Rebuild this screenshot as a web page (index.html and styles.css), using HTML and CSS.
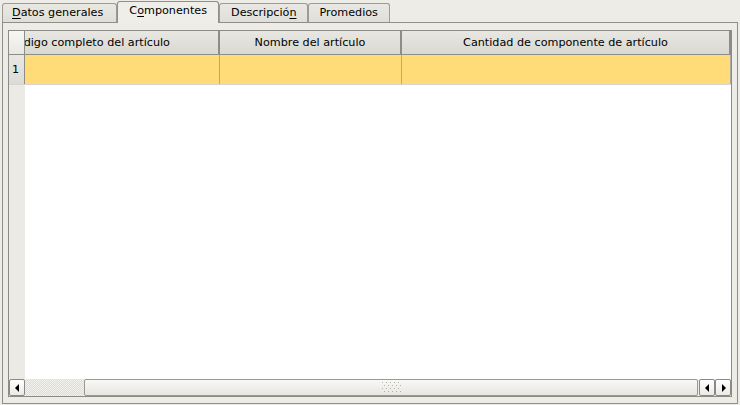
FILE: index.html
```html
<!DOCTYPE html>
<html lang="es">
<head>
<meta charset="utf-8">
<title>Componentes</title>
<link rel="stylesheet" href="styles.css">
</head>
<body>
<div class="window">
  <div class="tabs">
    <div class="tab first"><u>D</u>atos generales</div>
    <div class="tab active">C<u>o</u>mponentes</div>
    <div class="tab">Descripció<u>n</u></div>
    <div class="tab last">Promedios</div>
  </div>
  <div class="panel">
    <div class="table">
      <div class="head">
        <div class="corner"></div>
        <div class="hcell c1"><span class="scrolled">Código completo del artículo</span></div>
        <div class="hcell c2">Nombre del artículo</div>
        <div class="hcell c3">Cantidad de componente de artículo</div>
      </div>
      <div class="row">
        <div class="rowhead">1</div>
        <div class="cell c1"></div>
        <div class="cell c2"></div>
        <div class="cell c3"></div>
      </div>
      <div class="body">
        <div class="bodyleft"></div>
        <div class="bodymain"></div>
      </div>
      <div class="hscroll">
        <div class="sbtn"><svg width="5" height="8" viewBox="0 0 5 8"><path d="M4 0 L0 4 L4 8 Z" fill="#000"/></svg></div>
        <div class="trough"></div>
        <div class="thumb">
          <svg class="grip" width="19" height="11" viewBox="0 0 19 11">
            <g fill="#b4b3ad">
              <rect x="0" y="0" width="1" height="1"/><rect x="4" y="0" width="1" height="1"/><rect x="8" y="0" width="1" height="1"/><rect x="12" y="0" width="1" height="1"/><rect x="16" y="0" width="1" height="1"/>
              <rect x="2" y="3" width="1" height="1"/><rect x="6" y="3" width="1" height="1"/><rect x="10" y="3" width="1" height="1"/><rect x="14" y="3" width="1" height="1"/><rect x="18" y="3" width="1" height="1"/>
              <rect x="0" y="6" width="1" height="1"/><rect x="4" y="6" width="1" height="1"/><rect x="8" y="6" width="1" height="1"/><rect x="12" y="6" width="1" height="1"/><rect x="16" y="6" width="1" height="1"/>
              <rect x="2" y="9" width="1" height="1"/><rect x="6" y="9" width="1" height="1"/><rect x="10" y="9" width="1" height="1"/><rect x="14" y="9" width="1" height="1"/><rect x="18" y="9" width="1" height="1"/>
            </g>
          </svg>
        </div>
        <div class="sbtn"><svg width="5" height="8" viewBox="0 0 5 8"><path d="M4 0 L0 4 L4 8 Z" fill="#000"/></svg></div>
        <div class="sbtn"><svg width="5" height="8" viewBox="0 0 5 8"><path d="M1 0 L5 4 L1 8 Z" fill="#000"/></svg></div>
      </div>
    </div>
  </div>
</div>
</body>
</html>
```
FILE: styles.css
```css
html, body {
  margin: 0;
  padding: 0;
  background: #edece6;
}

.window {
  width: 740px;
  height: 405px;
  box-sizing: border-box;
  padding-bottom: 1px;
  display: flex;
  flex-direction: column;
  background: #edece6;
  font-family: "DejaVu Sans", sans-serif;
  font-size: 11.2px;
  color: #000;
}

.tabs {
  height: 22px;
  flex: none;
  display: flex;
  align-items: flex-end;
  padding-left: 2px;
  position: relative;
  z-index: 1;
}

.tab {
  height: 19px;
  box-sizing: border-box;
  border: 1px solid #9c9b96;
  border-bottom: none;
  border-radius: 3px 3px 0 0;
  background: linear-gradient(#e9e8e3, #dfded8);
  padding: 0 10px 0 11px;
  line-height: 17px;
  white-space: nowrap;
}

.tab.first {
  padding-left: 9px;
  padding-right: 13px;
}

.tab.last {
  padding-right: 11px;
}

.tab.active {
  height: 22px;
  margin-bottom: -1px;
  line-height: 18px;
  background: #efeee9;
  border-color: #8f8e89;
  padding: 0 11px 0 11px;
}

.tab u {
  text-decoration-thickness: 1px;
  text-underline-offset: 2px;
}

.panel {
  flex: 1;
  margin: 0 2px;
  border: 1px solid #8f8e89;
  padding: 7px 5px 6px 5px;
  display: flex;
  min-height: 0;
}

.table {
  flex: 1;
  border: 1px solid #8c8b86;
  display: flex;
  flex-direction: column;
  background: #fff;
  min-height: 0;
}

.head {
  height: 24px;
  flex: none;
  display: flex;
  box-sizing: border-box;
  border-bottom: 1px solid #8e8e89;
}

.corner {
  width: 16px;
  flex: none;
  box-sizing: border-box;
  background: linear-gradient(#f7f7f4, #e9e8e3);
  border-right: 1px solid #8e8e89;
}

.hcell {
  box-sizing: border-box;
  background: linear-gradient(#e8e7e2, #d9d8d2);
  border-right: 2px solid #8d8d88;
  display: flex;
  align-items: center;
  justify-content: center;
  overflow: hidden;
  white-space: nowrap;
}

.c1 { width: 195px; flex: none; }
.c2 { width: 182px; flex: none; }
.c3 { flex: 1; }

.hcell.c1 {
  justify-content: flex-start;
}

.scrolled {
  margin-left: -16px;
}

.row {
  height: 30px;
  flex: none;
  display: flex;
  box-sizing: border-box;
  border-bottom: 1px solid #d6d5cf;
}

.rowhead {
  width: 16px;
  flex: none;
  box-sizing: border-box;
  background: linear-gradient(#e8e7e2, #dcdbd5);
  border-right: 1px solid #8e8e89;
  padding-left: 3px;
  display: flex;
  align-items: center;
}

.cell {
  box-sizing: border-box;
  background: #ffdc78;
  border-right: 1px solid #a9a8a2;
}

.body {
  flex: 1;
  display: flex;
  min-height: 0;
}

.bodyleft {
  width: 16px;
  flex: none;
  background: #ebeae5;
}

.bodymain {
  flex: 1;
  background: #fff;
}

.hscroll {
  height: 17px;
  flex: none;
  display: flex;
  background: #edece6;
}

.sbtn {
  width: 16px;
  flex: none;
  box-sizing: border-box;
  border: 1px solid #8a8984;
  border-radius: 2px;
  background: linear-gradient(#ffffff, #ebeae5);
  display: flex;
  align-items: center;
  justify-content: center;
}

.trough {
  width: 59px;
  flex: none;
  background: repeating-conic-gradient(#dcdbd5 0 25%, #f3f2ee 0 50%) 0 0 / 2px 2px;
}

.thumb {
  flex: 1;
  box-sizing: border-box;
  border: 1px solid #9a9994;
  border-radius: 2px;
  background: linear-gradient(#f8f8f6, #e7e6e1);
  display: flex;
  align-items: center;
  justify-content: center;
  margin-right: 1px;
}
```
